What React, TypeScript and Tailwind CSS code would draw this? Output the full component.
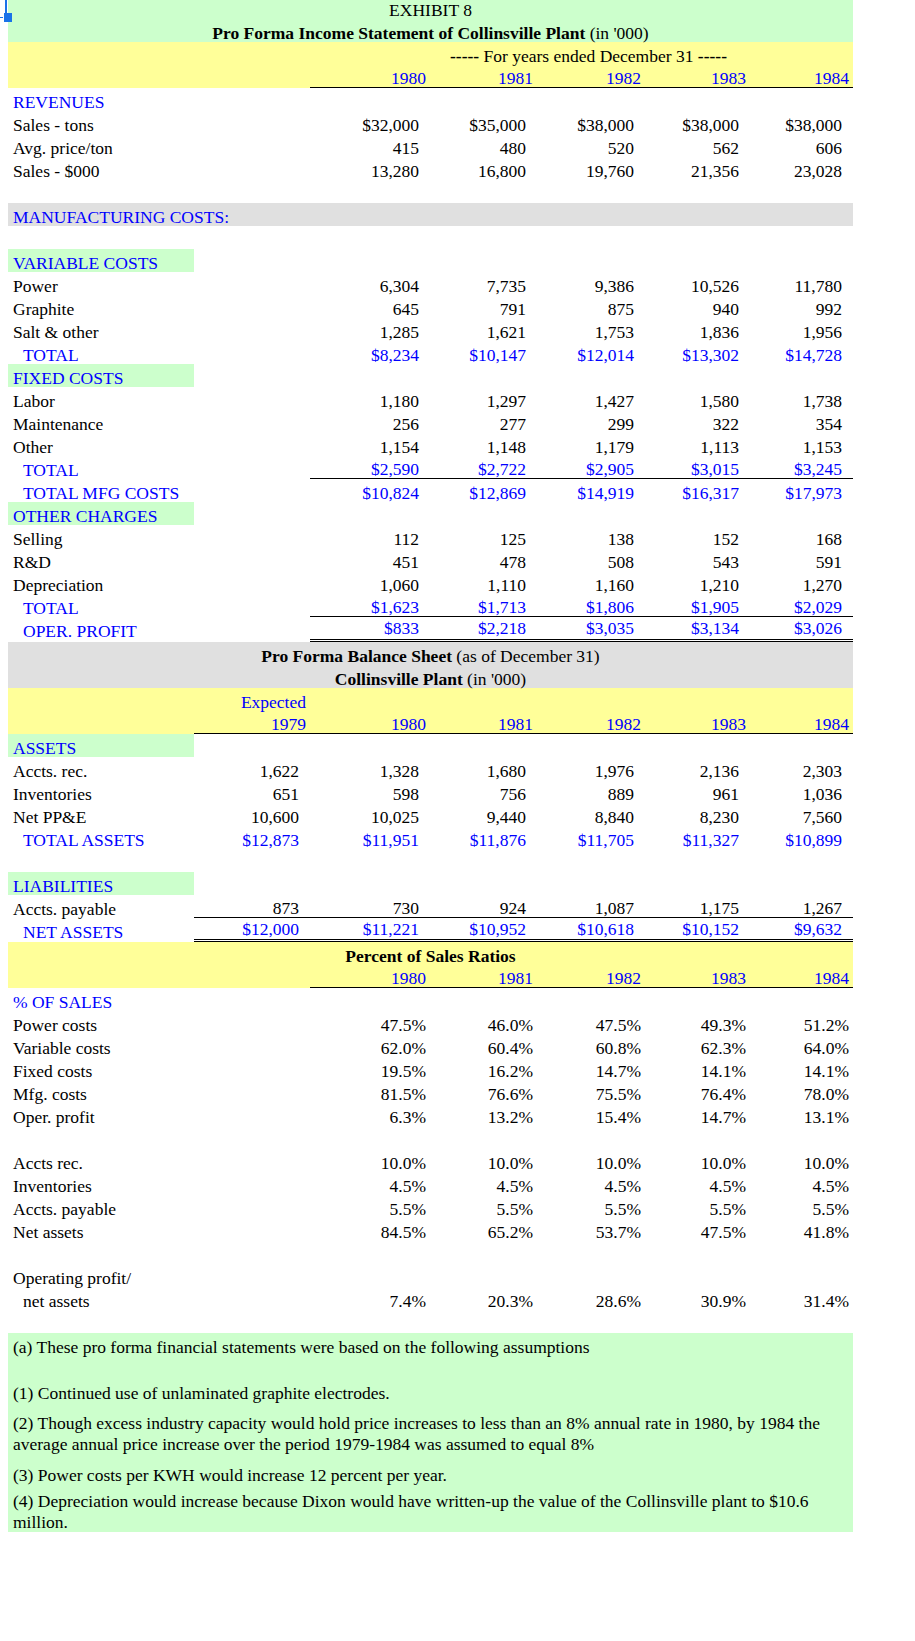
import React from "react";

const GRID = "grid grid-cols-[186px_116px_120px_107px_108px_105px_103px]";
const BLUE = "text-[#0000ff]";
const GREEN = "bg-[#ccffcc]";
const YELLOW = "bg-[#ffff99]";
const GRAY = "bg-[#e0e0e0]";

type RowProps = {
  label?: React.ReactNode;
  indent?: boolean;
  blue?: boolean;
  green?: boolean;
  vals?: (string | null)[];
  blueVals?: boolean;
  pct?: boolean;
  border?: "single" | "double";
  borderFrom?: number;
  h?: string;
  pb?: string;
};

function Row({
  label,
  indent,
  blue,
  green,
  vals = [null, null, null, null, null, null],
  blueVals,
  pct,
  border,
  borderFrom = 2,
  h = "h-[23px]",
  pb = "pb-0",
}: RowProps) {
  return (
    <div className={`${GRID} ${h}`}>
      <div
        className={`flex items-end whitespace-nowrap ${pb} ${indent ? "pl-[15px]" : "pl-[5px]"} ${
          blue ? BLUE : "text-black"
        } ${green ? GREEN : ""}`}
      >
        {label}
      </div>
      {vals.map((v, i) => {
        const col = i + 1;
        const hasBorder = border && col >= borderFrom;
        const bcls = hasBorder
          ? border === "double"
            ? "border-b-[3px] border-double border-black"
            : "border-b border-black"
          : "";
        return (
          <div
            key={i}
            className={`flex items-end justify-end whitespace-nowrap ${pb} ${
              pct ? "pr-[4px]" : "pr-[11px]"
            } ${blueVals ? BLUE : "text-black"} ${bcls}`}
          >
            {v}
          </div>
        );
      })}
    </div>
  );
}

function YearRow({ from, years }: { from: number; years: string[] }) {
  const cells: (string | null)[] = [null, null, null, null, null, null];
  years.forEach((y, i) => {
    cells[from - 1 + i] = y;
  });
  return (
    <div className={`${GRID} h-[23px] ${YELLOW}`}>
      <div />
      {cells.map((v, i) => (
        <div
          key={i}
          className={`flex items-end justify-end pr-[4px] ${BLUE} ${
            i + 1 >= from ? "border-b border-black" : ""
          }`}
        >
          {v}
        </div>
      ))}
    </div>
  );
}

function Centered({
  children,
  bg,
  h = "h-[23px]",
}: {
  children: React.ReactNode;
  bg: string;
  h?: string;
}) {
  return (
    <div className={`flex ${h} items-end justify-center whitespace-nowrap ${bg}`}>
      <span>{children}</span>
    </div>
  );
}

export default function App() {
  return (
    <div
      className="relative min-h-[1641px] w-[915px] bg-white text-black text-[17.5px] leading-[17px]"
      style={{ fontFamily: '"Liberation Serif", "Times New Roman", serif' }}
    >
      {/* selection handle overlay */}
      <div className="absolute left-[5px] top-0 h-[14px] w-[2px] bg-[#1a73e8]" />
      <div className="absolute left-[4px] top-[13px] h-[9px] w-[8px] bg-[#1a73e8]" />
      <div className="absolute left-0 top-[17px] h-[1px] w-[3px] bg-[#1a73e8]" />

      <div className="ml-[8px] w-[845px]">
        {/* Income statement header */}
        <Centered bg={GREEN} h="h-[19px]">
          EXHIBIT 8
        </Centered>
        <Centered bg={GREEN}>
          <b>Pro Forma Income Statement of Collinsville Plant</b> (in '000)
        </Centered>
        <div className={`${GRID} h-[23px] ${YELLOW}`}>
          <div />
          <div />
          <div className="col-span-5 flex items-end justify-center pl-[14px] whitespace-nowrap">
            <span>
              <b>-----</b> For years ended December 31 <b>-----</b>
            </span>
          </div>
        </div>
        <YearRow from={2} years={["1980", "1981", "1982", "1983", "1984"]} />

        <Row label="REVENUES" blue />
        <Row label="Sales - tons" vals={[null, "$32,000", "$35,000", "$38,000", "$38,000", "$38,000"]} />
        <Row label="Avg. price/ton" vals={[null, "415", "480", "520", "562", "606"]} />
        <Row label="Sales - $000" vals={[null, "13,280", "16,800", "19,760", "21,356", "23,028"]} />
        <Row />
        <div className={`flex h-[23px] items-end pl-[5px] ${GRAY} ${BLUE}`}>MANUFACTURING COSTS:</div>
        <Row />
        <Row label="VARIABLE COSTS" blue green />
        <Row label="Power" vals={[null, "6,304", "7,735", "9,386", "10,526", "11,780"]} />
        <Row label="Graphite" vals={[null, "645", "791", "875", "940", "992"]} />
        <Row label="Salt & other" vals={[null, "1,285", "1,621", "1,753", "1,836", "1,956"]} />
        <Row
          label="TOTAL"
          indent
          blue
          blueVals
          vals={[null, "$8,234", "$10,147", "$12,014", "$13,302", "$14,728"]}
        />
        <Row label="FIXED COSTS" blue green />
        <Row label="Labor" vals={[null, "1,180", "1,297", "1,427", "1,580", "1,738"]} />
        <Row label="Maintenance" vals={[null, "256", "277", "299", "322", "354"]} />
        <Row label="Other" vals={[null, "1,154", "1,148", "1,179", "1,113", "1,153"]} />
        <Row
          label="TOTAL"
          indent
          blue
          blueVals
          border="single"
          vals={[null, "$2,590", "$2,722", "$2,905", "$3,015", "$3,245"]}
        />
        <Row
          label="TOTAL MFG COSTS"
          indent
          blue
          blueVals
          vals={[null, "$10,824", "$12,869", "$14,919", "$16,317", "$17,973"]}
        />
        <Row label="OTHER CHARGES" blue green />
        <Row label="Selling" vals={[null, "112", "125", "138", "152", "168"]} />
        <Row label="R&D" vals={[null, "451", "478", "508", "543", "591"]} />
        <Row label="Depreciation" vals={[null, "1,060", "1,110", "1,160", "1,210", "1,270"]} />
        <Row
          label="TOTAL"
          indent
          blue
          blueVals
          border="single"
          vals={[null, "$1,623", "$1,713", "$1,806", "$1,905", "$2,029"]}
        />
        <Row
          label="OPER. PROFIT"
          indent
          blue
          blueVals
          border="double"
          h="h-[25px]"
          pb="pb-[2px]"
          vals={[null, "$833", "$2,218", "$3,035", "$3,134", "$3,026"]}
        />

        {/* Balance sheet */}
        <Centered bg={GRAY}>
          <b>Pro Forma Balance Sheet</b> (as of December 31)
        </Centered>
        <Centered bg={GRAY}>
          <b>Collinsville Plant</b> (in '000)
        </Centered>
        <div className={`${GRID} h-[23px] ${YELLOW}`}>
          <div />
          <div className={`flex items-end justify-end pr-[4px] ${BLUE}`}>Expected</div>
        </div>
        <YearRow from={1} years={["1979", "1980", "1981", "1982", "1983", "1984"]} />
        <Row label="ASSETS" blue green />
        <Row label="Accts. rec." vals={["1,622", "1,328", "1,680", "1,976", "2,136", "2,303"]} />
        <Row label="Inventories" vals={["651", "598", "756", "889", "961", "1,036"]} />
        <Row label="Net PP&E" vals={["10,600", "10,025", "9,440", "8,840", "8,230", "7,560"]} />
        <Row
          label="TOTAL ASSETS"
          indent
          blue
          blueVals
          vals={["$12,873", "$11,951", "$11,876", "$11,705", "$11,327", "$10,899"]}
        />
        <Row />
        <Row label="LIABILITIES" blue green />
        <Row
          label="Accts. payable"
          border="single"
          borderFrom={1}
          vals={["873", "730", "924", "1,087", "1,175", "1,267"]}
        />
        <Row
          label="NET ASSETS"
          indent
          blue
          blueVals
          border="double"
          borderFrom={1}
          h="h-[24px]"
          pb="pb-[1px]"
          vals={["$12,000", "$11,221", "$10,952", "$10,618", "$10,152", "$9,632"]}
        />

        {/* Percent of sales */}
        <Centered bg={YELLOW}>
          <b>Percent of Sales Ratios</b>
        </Centered>
        <YearRow from={2} years={["1980", "1981", "1982", "1983", "1984"]} />
        <Row label="% OF SALES" blue />
        <Row label="Power costs" pct vals={[null, "47.5%", "46.0%", "47.5%", "49.3%", "51.2%"]} />
        <Row label="Variable costs" pct vals={[null, "62.0%", "60.4%", "60.8%", "62.3%", "64.0%"]} />
        <Row label="Fixed costs" pct vals={[null, "19.5%", "16.2%", "14.7%", "14.1%", "14.1%"]} />
        <Row label="Mfg. costs" pct vals={[null, "81.5%", "76.6%", "75.5%", "76.4%", "78.0%"]} />
        <Row label="Oper. profit" pct vals={[null, "6.3%", "13.2%", "15.4%", "14.7%", "13.1%"]} />
        <Row />
        <Row label="Accts rec." pct vals={[null, "10.0%", "10.0%", "10.0%", "10.0%", "10.0%"]} />
        <Row label="Inventories" pct vals={[null, "4.5%", "4.5%", "4.5%", "4.5%", "4.5%"]} />
        <Row label="Accts. payable" pct vals={[null, "5.5%", "5.5%", "5.5%", "5.5%", "5.5%"]} />
        <Row label="Net assets" pct vals={[null, "84.5%", "65.2%", "53.7%", "47.5%", "41.8%"]} />
        <Row />
        <Row label="Operating profit/" />
        <Row label="net assets" indent pct vals={[null, "7.4%", "20.3%", "28.6%", "30.9%", "31.4%"]} />
        <Row />

        {/* Footnotes */}
        <div className={`${GREEN} pl-[5px] whitespace-nowrap leading-[21px]`}>
          <div className="flex h-[23px] items-center pt-[6px]">
            (a) These pro forma financial statements were based on the following assumptions
          </div>
          <div className="h-[23px]" />
          <div className="flex h-[24px] items-center pt-[4px]">(1) Continued use of unlaminated graphite electrodes.</div>
          <div className="flex h-[57px] items-center pt-[4px]">
            <div>
              (2) Though excess industry capacity would hold price increases to less than an 8% annual rate in 1980, by 1984 the
              <br />
              average annual price increase over the period 1979-1984 was assumed to equal 8%
            </div>
          </div>
          <div className="flex h-[27px] items-center pt-[4px]">(3) Power costs per KWH would increase 12 percent per year.</div>
          <div className="flex h-[45px] items-center pt-[4px]">
            <div>
              (4) Depreciation would increase because Dixon would have written-up the value of the Collinsville plant to $10.6
              <br />
              million.
            </div>
          </div>
        </div>
      </div>
    </div>
  );
}
